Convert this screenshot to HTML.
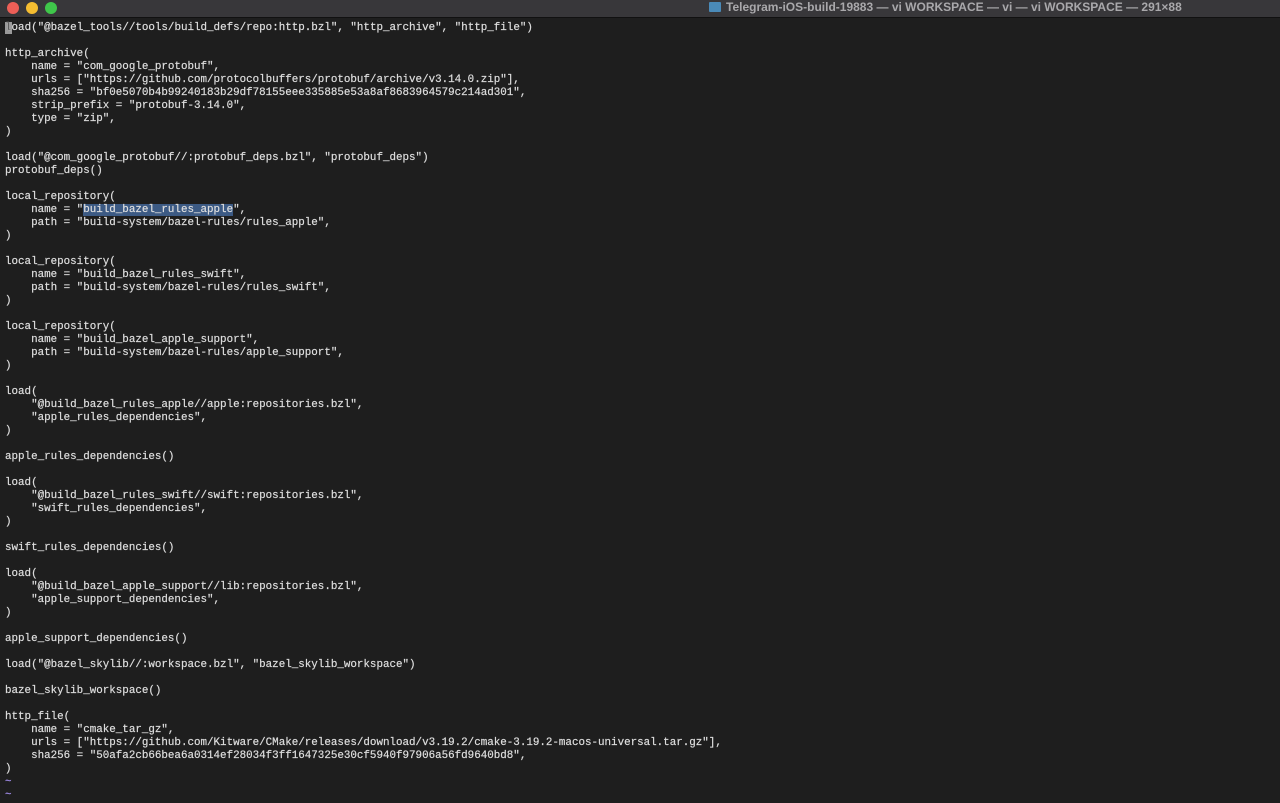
<!DOCTYPE html>
<html><head><meta charset="utf-8"><style>
html,body{margin:0;padding:0;background:#1e1e1e;width:1280px;height:803px;overflow:hidden}
.tb{position:absolute;left:0;top:0;width:1280px;height:17px;background:#38373a;border-bottom:1px solid #111}
.dot{position:absolute;top:2px;width:12px;height:12px;border-radius:50%}
.title{position:absolute;left:709px;top:0;height:17px;line-height:11px;font:bold 12px "Liberation Sans",sans-serif;color:#a9a8ab;white-space:nowrap}
.ic{display:inline-block;width:12px;height:10px;background:#4a8ab8;vertical-align:-1px;margin-right:5px;border-radius:1px}
pre{position:absolute;left:5px;top:22px;margin:0;font:10.87px/13px "Liberation Mono",monospace;color:#dedede;-webkit-text-stroke:0.2px #dedede}
.hl{background:#3c5a84}
.cur{background:#9a9a9a;color:#1e1e1e}
.t{color:#a08be8;-webkit-text-stroke:0.2px #a08be8}
</style></head><body>
<div class="tb">
<div class="dot" style="left:7px;background:#ed5f57"></div>
<div class="dot" style="left:26px;background:#f5bd31"></div>
<div class="dot" style="left:45px;background:#3fc64a"></div>
<div class="title"><span class="ic"></span>Telegram-iOS-build-19883 — vi WORKSPACE — vi — vi WORKSPACE — 291×88</div>
</div>
<pre><span class="cur">l</span>oad("@bazel_tools//tools/build_defs/repo:http.bzl", "http_archive", "http_file")

http_archive(
    name = "com_google_protobuf",
    urls = ["https://github.com/protocolbuffers/protobuf/archive/v3.14.0.zip"],
    sha256 = "bf0e5070b4b99240183b29df78155eee335885e53a8af8683964579c214ad301",
    strip_prefix = "protobuf-3.14.0",
    type = "zip",
)

load("@com_google_protobuf//:protobuf_deps.bzl", "protobuf_deps")
protobuf_deps()

local_repository(
    name = "<span class="hl">build_bazel_rules_apple</span>",
    path = "build-system/bazel-rules/rules_apple",
)

local_repository(
    name = "build_bazel_rules_swift",
    path = "build-system/bazel-rules/rules_swift",
)

local_repository(
    name = "build_bazel_apple_support",
    path = "build-system/bazel-rules/apple_support",
)

load(
    "@build_bazel_rules_apple//apple:repositories.bzl",
    "apple_rules_dependencies",
)

apple_rules_dependencies()

load(
    "@build_bazel_rules_swift//swift:repositories.bzl",
    "swift_rules_dependencies",
)

swift_rules_dependencies()

load(
    "@build_bazel_apple_support//lib:repositories.bzl",
    "apple_support_dependencies",
)

apple_support_dependencies()

load("@bazel_skylib//:workspace.bzl", "bazel_skylib_workspace")

bazel_skylib_workspace()

http_file(
    name = "cmake_tar_gz",
    urls = ["https://github.com/Kitware/CMake/releases/download/v3.19.2/cmake-3.19.2-macos-universal.tar.gz"],
    sha256 = "50afa2cb66bea6a0314ef28034f3ff1647325e30cf5940f97906a56fd9640bd8",
)
<span class="t">~</span>
<span class="t">~</span></pre>
</body></html>
